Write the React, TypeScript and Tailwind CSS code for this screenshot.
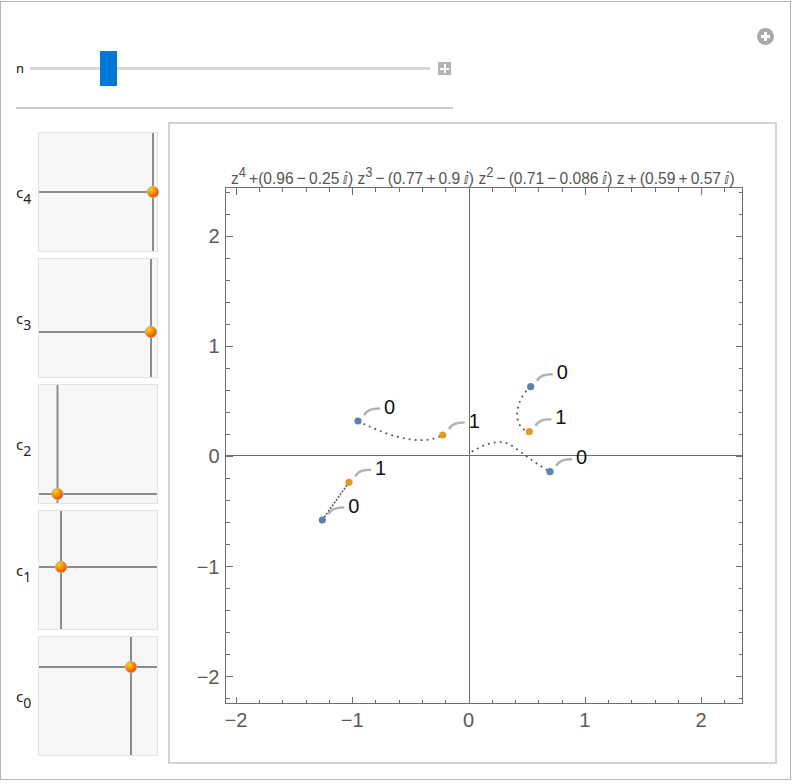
import React, { useLayoutEffect, useRef, useState } from "react";

const X = (u: number) => 468.5 + 116.3 * u;
const Y = (v: number) => 456 - 110.2 * v;

const FL = 225.5;
const FR = 742.5;
const FT = 187.5;
const FB = 703.5;

function Pad({ vx, hy, id }: { vx: number; hy: number; id: string }) {
  return (
    <div className="w-[120px] h-[120px] border border-[#e2e2e2] bg-[#f7f7f7]">
      <svg width="118" height="118" className="block overflow-visible">
        <defs>
          <radialGradient id={id} cx="0.35" cy="0.3" r="0.8">
            <stop offset="0" stopColor="#ffd81e" />
            <stop offset="0.45" stopColor="#ff8c00" />
            <stop offset="1" stopColor="#e83400" />
          </radialGradient>
        </defs>
        <line x1={vx} y1={0} x2={vx} y2={118} stroke="#8c8c8c" strokeWidth="2" />
        <line x1={0} y1={hy} x2={118} y2={hy} stroke="#8c8c8c" strokeWidth="2" />
        <circle cx={vx} cy={hy} r="5.8" fill={`url(#${id})`} stroke="#bdbdbd" strokeWidth="0.8" />
      </svg>
    </div>
  );
}

function PadRow({ n, vx, hy }: { n: string; vx: number; hy: number }) {
  return (
    <div className="flex items-center">
      <div className="w-[22px] text-[15px] leading-none text-[#222] font-['Noto_Sans',sans-serif]">
        c<span className="relative top-[6px] text-[14px]">{n}</span>
      </div>
      <Pad vx={vx} hy={hy} id={`g${n}`} />
    </div>
  );
}

type P = [number, number];

function Callout({ p, label }: { p: P; label: string }) {
  const sx = p[0] + 6.7;
  const sy = p[1] - 6.7;
  const ex = p[0] + 21;
  const ey = p[1] - 12.5;
  return (
    <g>
      <path
        d={`M${sx},${sy} Q${sx + 3.5},${ey} ${ex},${ey}`}
        fill="none"
        stroke="#b3b3b3"
        strokeWidth="2.5"
        strokeLinecap="round"
      />
      <text x={p[0] + 26} y={p[1] - 7.3} fontSize="20" fill="#111">
        {label}
      </text>
    </g>
  );
}

const II = "'DejaVu Sans', sans-serif";

function Title() {
  const ref = useRef<SVGTextElement>(null);
  const [sx, setSx] = useState(0.85);
  useLayoutEffect(() => {
    if (ref.current) {
      const w = ref.current.getBBox().width;
      if (w > 0) setSx(504 / w);
    }
  }, []);
  return (
    <text
      ref={ref}
      x="0"
      y="0"
      transform={`translate(231,184) scale(${sx},1)`}
      fontSize="17"
      fill="#555"
    >
      z<tspan fontSize="14" dy="-7">4</tspan>
      <tspan dy="7">{"\u2009+(0.96\u2009\u2212\u20090.25\u2009"}</tspan>
      <tspan fontFamily={II} fontStyle="italic">ⅈ</tspan>
      {") z"}
      <tspan fontSize="14" dy="-7">3</tspan>
      <tspan dy="7">{"\u2009\u2212\u2009(0.77\u2009+\u20090.9\u2009"}</tspan>
      <tspan fontFamily={II} fontStyle="italic">ⅈ</tspan>
      {") z"}
      <tspan fontSize="14" dy="-7">2</tspan>
      <tspan dy="7">{"\u2009\u2212\u2009(0.71\u2009\u2212\u20090.086\u2009"}</tspan>
      <tspan fontFamily={II} fontStyle="italic">ⅈ</tspan>
      {") z\u2009+\u2009(0.59\u2009+\u20090.57\u2009"}
      <tspan fontFamily={II} fontStyle="italic">ⅈ</tspan>
      {")"}
    </text>
  );
}

function Plot() {
  const xMaj = [-2, -1, 0, 1, 2];
  const yMaj = [-2, -1, 0, 1, 2];
  const xMin: number[] = [];
  for (let k = -10; k <= 11; k++) if (k % 5 !== 0) xMin.push(k / 5);
  const yMin: number[] = [];
  for (let k = -11; k <= 12; k++) if (k % 5 !== 0) yMin.push(k / 5);
  const lab = (n: number) => (n < 0 ? `\u2212${-n}` : `${n}`);
  const r = (n: number) => Math.round(n) + 0.5;

  const blue: P[] = [
    [358, 421],
    [530.7, 386.7],
    [550, 471.7],
    [322.3, 520],
  ];
  const orange: P[] = [
    [442.7, 435],
    [529.3, 431.7],
    [349, 482.3],
  ];
  const tc = "#6e6e6e";
  return (
    <svg
      width="605"
      height="638"
      viewBox="170 124 605 638"
      className="block"
      style={{ fontFamily: "'Liberation Sans', 'DejaVu Sans', sans-serif" }}
    >
      <Title />

      {/* axes */}
      <g shapeRendering="crispEdges" stroke={tc} strokeWidth="1">
        <line x1={r(X(0))} y1={FT} x2={r(X(0))} y2={FB} />
        <line x1={FL} y1={r(Y(0)) - 1} x2={FR} y2={r(Y(0)) - 1} />
        <rect x={FL} y={FT} width={FR - FL} height={FB - FT} fill="none" />
        {xMaj.map((u) => (
          <g key={`xm${u}`}>
            <line x1={r(X(u))} y1={FB} x2={r(X(u))} y2={FB - 7} />
            <line x1={r(X(u))} y1={FT} x2={r(X(u))} y2={FT + 7} />
          </g>
        ))}
        {xMin.map((u) => (
          <g key={`xn${u}`}>
            <line x1={r(X(u))} y1={FB} x2={r(X(u))} y2={FB - 4} />
            <line x1={r(X(u))} y1={FT} x2={r(X(u))} y2={FT + 4} />
          </g>
        ))}
        {yMaj.map((v) => (
          <g key={`ym${v}`}>
            <line x1={FL} y1={r(Y(v))} x2={FL + 7} y2={r(Y(v))} />
            <line x1={FR} y1={r(Y(v))} x2={FR - 7} y2={r(Y(v))} />
          </g>
        ))}
        {yMin.map((v) => (
          <g key={`yn${v}`}>
            <line x1={FL} y1={r(Y(v))} x2={FL + 4} y2={r(Y(v))} />
            <line x1={FR} y1={r(Y(v))} x2={FR - 4} y2={r(Y(v))} />
          </g>
        ))}
      </g>
      {xMaj.map((u) => (
        <text key={`xl${u}`} x={X(u)} y={727} fontSize="20" fill="#5a5a5a" textAnchor="middle">
          {lab(u)}
        </text>
      ))}
      {yMaj.map((v) => (
        <text key={`yl${v}`} x={219.5} y={Y(v) + 7.3} fontSize="20" fill="#5a5a5a" textAnchor="end">
          {lab(v)}
        </text>
      ))}

      {/* trajectories */}
      <g fill="none" stroke="#555" strokeWidth="1.8" strokeDasharray="1.8 4.2">
        <path d="M358,421 Q415,450 442.7,435" />
        <path d="M530.7,386.7 C515,399 511,428 529.3,431.7" />
        <path d="M471.7,451.7 C490,441 503,439 514,447 C527,457 540,466 550,471.7" />
      </g>
      <path d="M322.3,520 L349,482.3" stroke="#555" strokeWidth="1.5" strokeDasharray="2 1.4" fill="none" />

      {blue.map((p, i) => (
        <circle key={`b${i}`} cx={p[0]} cy={p[1]} r="3.6" fill="#5e81b5" />
      ))}
      {orange.map((p, i) => (
        <circle key={`o${i}`} cx={p[0]} cy={p[1]} r="3.6" fill="#e19c24" />
      ))}
      {blue.map((p, i) => (
        <Callout key={`bc${i}`} p={p} label="0" />
      ))}
      {orange.map((p, i) => (
        <Callout key={`oc${i}`} p={p} label="1" />
      ))}
    </svg>
  );
}

export default function App() {
  return (
    <div className="w-[792px] h-[784px] bg-white pt-px font-['Noto_Sans',sans-serif]">
      <div className="w-[791px] h-[779px] border border-[#b4b4b4] flex flex-col">
        {/* top icon row */}
        <div className="h-[49px] flex justify-end items-start pt-[26px] pr-[16px]">
          <div className="w-[17px] h-[17px] rounded-full bg-[#a9a9a9] flex items-center justify-center relative">
            <div className="absolute w-[9px] h-[3px] bg-white" />
            <div className="absolute w-[3px] h-[9px] bg-white" />
          </div>
        </div>
        {/* slider row */}
        <div className="h-[35px] flex items-center pl-[15px]">
          <div className="w-[14px] text-[13px] leading-none text-[#111]">n</div>
          <div className="relative w-[400px] h-[35px] flex items-center">
            <div className="w-full h-[3px] bg-[#d8d8d8]" />
            <div className="absolute left-[70px] top-0 w-[17px] h-[35px] bg-[#0078d7]" />
          </div>
          <div className="ml-[8px] w-[13px] h-[13px] bg-[#b4b4b4] relative flex items-center justify-center">
            <div className="absolute w-[9px] h-[2px] bg-white" />
            <div className="absolute w-[2px] h-[9px] bg-white" />
          </div>
        </div>
        {/* separator */}
        <div className="mt-[21px] ml-[15px] w-[437px] h-[2px] bg-[#cccccc]" />
        {/* body */}
        <div className="mt-[13px] flex">
          <div className="pl-[15px] pt-[10px] flex flex-col gap-[6px]">
            <PadRow n="4" vx={114} hy={59} />
            <PadRow n="3" vx={112} hy={73} />
            <PadRow n="2" vx={18.5} hy={109} />
            <PadRow n="1" vx={22} hy={56} />
            <PadRow n="0" vx={92} hy={30} />
          </div>
          <div className="ml-[10px] w-[609px] h-[642px] border-2 border-[#d4d4d4] bg-white">
            <Plot />
          </div>
        </div>
      </div>
    </div>
  );
}
